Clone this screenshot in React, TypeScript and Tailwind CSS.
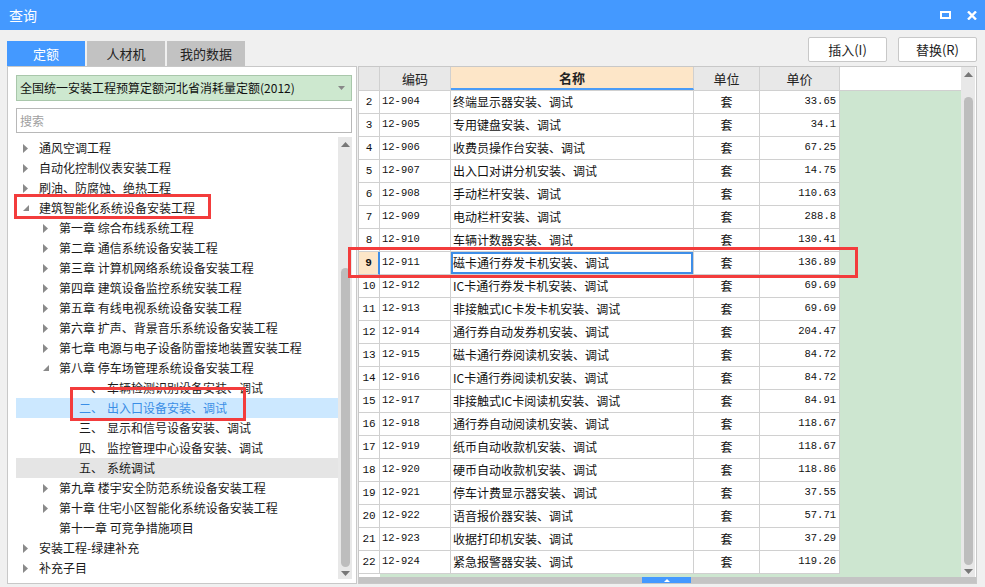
import React from "react";

const rows: [number, string, string, string][] = [
  [2, "12-904", "终端显示器安装、调试", "33.65"],
  [3, "12-905", "专用键盘安装、调试", "34.1"],
  [4, "12-906", "收费员操作台安装、调试", "67.25"],
  [5, "12-907", "出入口对讲分机安装、调试", "14.75"],
  [6, "12-908", "手动栏杆安装、调试", "110.63"],
  [7, "12-909", "电动栏杆安装、调试", "288.8"],
  [8, "12-910", "车辆计数器安装、调试", "130.41"],
  [9, "12-911", "磁卡通行券发卡机安装、调试", "136.89"],
  [10, "12-912", "IC卡通行券发卡机安装、调试", "69.69"],
  [11, "12-913", "非接触式IC卡发卡机安装、调试", "69.69"],
  [12, "12-914", "通行券自动发券机安装、调试", "204.47"],
  [13, "12-915", "磁卡通行券阅读机安装、调试", "84.72"],
  [14, "12-916", "IC卡通行券阅读机安装、调试", "84.72"],
  [15, "12-917", "非接触式IC卡阅读机安装、调试", "84.91"],
  [16, "12-918", "通行券自动阅读机安装、调试", "118.67"],
  [17, "12-919", "纸币自动收款机安装、调试", "118.67"],
  [18, "12-920", "硬币自动收款机安装、调试", "118.86"],
  [19, "12-921", "停车计费显示器安装、调试", "37.55"],
  [20, "12-922", "语音报价器安装、调试", "57.71"],
  [21, "12-923", "收据打印机安装、调试", "37.29"],
  [22, "12-924", "紧急报警器安装、调试", "119.26"],
];

type TreeItem = {
  level: number;
  arrow: "right" | "down" | "none";
  text: string;
  label?: string;
  state?: "sel" | "hover";
};

const tree: TreeItem[] = [
  { level: 0, arrow: "right", text: "通风空调工程" },
  { level: 0, arrow: "right", text: "自动化控制仪表安装工程" },
  { level: 0, arrow: "right", text: "刷油、防腐蚀、绝热工程" },
  { level: 0, arrow: "down", text: "建筑智能化系统设备安装工程" },
  { level: 1, arrow: "right", text: "第一章 综合布线系统工程" },
  { level: 1, arrow: "right", text: "第二章 通信系统设备安装工程" },
  { level: 1, arrow: "right", text: "第三章 计算机网络系统设备安装工程" },
  { level: 1, arrow: "right", text: "第四章 建筑设备监控系统安装工程" },
  { level: 1, arrow: "right", text: "第五章 有线电视系统设备安装工程" },
  { level: 1, arrow: "right", text: "第六章 扩声、背景音乐系统设备安装工程" },
  { level: 1, arrow: "right", text: "第七章 电源与电子设备防雷接地装置安装工程" },
  { level: 1, arrow: "down", text: "第八章 停车场管理系统设备安装工程" },
  { level: 2, arrow: "none", label: "一、", text: "车辆检测识别设备安装、调试" },
  { level: 2, arrow: "none", label: "二、", text: "出入口设备安装、调试", state: "sel" },
  { level: 2, arrow: "none", label: "三、", text: "显示和信号设备安装、调试" },
  { level: 2, arrow: "none", label: "四、", text: "监控管理中心设备安装、调试" },
  { level: 2, arrow: "none", label: "五、", text: "系统调试", state: "hover" },
  { level: 1, arrow: "right", text: "第九章 楼宇安全防范系统设备安装工程" },
  { level: 1, arrow: "right", text: "第十章 住宅小区智能化系统设备安装工程" },
  { level: 1, arrow: "none", text: "第十一章 可竞争措施项目" },
  { level: 0, arrow: "right", text: "安装工程-绿建补充" },
  { level: 0, arrow: "right", text: "补充子目" },
];

const FONT = { fontFamily: '"Noto Sans CJK SC", "Noto Sans", sans-serif' };
const MONO = { fontFamily: '"Liberation Mono", "Noto Sans CJK SC", monospace' };

function Arrow({ kind }: { kind: "right" | "down" | "none" }) {
  if (kind === "none") return <span className="inline-block w-[5px]" />;
  if (kind === "right")
    return (
      <svg width="5" height="9" viewBox="0 0 5 9" className="shrink-0">
        <path d="M0 0 L5 4.5 L0 9 Z" fill="#8a8a8a" />
      </svg>
    );
  return (
    <svg width="6" height="6" viewBox="0 0 6 6" className="shrink-0">
      <path d="M6 0 L6 6 L0 6 Z" fill="#8a8a8a" />
    </svg>
  );
}

function TreeRow({ item }: { item: TreeItem }) {
  const bg =
    item.state === "sel" ? "bg-[#cce8ff]" : item.state === "hover" ? "bg-[#e5e5e5]" : "";
  const color = item.state === "sel" ? "text-[#3a8ee6]" : "text-[#1a1a1a]";
  if (item.level === 2) {
    return (
      <div className={`h-[20px] flex items-center ${bg} ${color}`}>
        <span className="pl-[63px] w-[91px] shrink-0">{item.label}</span>
        <span className="whitespace-nowrap">{item.text}</span>
      </div>
    );
  }
  const arrowPad = item.level === 0 ? "pl-[7px]" : "pl-[27px]";
  return (
    <div className={`h-[20px] flex items-center ${bg} ${color} ${arrowPad}`}>
      <span className="w-[16px] shrink-0 flex items-center">
        <Arrow kind={item.arrow} />
      </span>
      <span className="whitespace-nowrap">{item.text}</span>
    </div>
  );
}

function VScroll({ thumbTop, thumbBottom }: { thumbTop: number; thumbBottom: number }) {
  return (
    <div className="w-[14px] h-full bg-[#e8e8e8] flex flex-col items-center">
      <div className="h-[12px] flex items-center justify-center mt-[1px]">
        <svg width="9" height="5" viewBox="0 0 9 5">
          <path d="M0 5 L4.5 0 L9 5 Z" fill="#777" />
        </svg>
      </div>
      <div style={{ height: thumbTop }} className="shrink-0" />
      <div className="w-[9px] rounded-full bg-[#bdbdbd] flex-1" style={{ marginBottom: thumbBottom }} />
      <div className="h-[12px] flex items-center justify-center">
        <svg width="9" height="5" viewBox="0 0 9 5">
          <path d="M0 0 L4.5 5 L9 0 Z" fill="#777" />
        </svg>
      </div>
    </div>
  );
}

export default function App() {
  return (
    <div className="relative w-[985px] h-[587px] bg-[#f0f0f0] flex flex-col overflow-hidden text-[12px]" style={FONT}>
      {/* Title bar */}
      <div className="h-[30px] bg-[#4499ff] flex items-center justify-between pl-[9px] pr-[8px] shrink-0">
        <span className="text-white text-[14px]">查询</span>
        <div className="flex items-center gap-[16px]">
          <svg width="11" height="8" viewBox="0 0 11 8">
            <rect x="1" y="1" width="9" height="6" fill="none" stroke="#fff" strokeWidth="2" />
          </svg>
          <svg width="10" height="9" viewBox="0 0 10 9">
            <path d="M1 0.5 L9 8.5 M9 0.5 L1 8.5" stroke="#fff" strokeWidth="2.4" />
          </svg>
        </div>
      </div>

      {/* Tabs + buttons */}
      <div className="h-[36px] flex items-end justify-between pl-[7px] pr-[8px] shrink-0 text-[13px]">
        <div className="flex gap-[2px] items-end">
          <div className="w-[78px] h-[25px] bg-[#4499ff] text-white flex items-center justify-center">定额</div>
          <div className="w-[78px] h-[25px] bg-[#c2c2c2] text-[#222] flex items-center justify-center">人材机</div>
          <div className="w-[78px] h-[25px] bg-[#c2c2c2] text-[#222] flex items-center justify-center">我的数据</div>
        </div>
        <div className="flex gap-[11px] self-start mt-[7px]">
          <div className="w-[79px] h-[25px] bg-white border border-[#c8c8c8] rounded-[2px] flex items-center justify-center text-[#222]">插入(I)</div>
          <div className="w-[79px] h-[25px] bg-white border border-[#c8c8c8] rounded-[2px] flex items-center justify-center text-[#222]">替换(R)</div>
        </div>
      </div>

      {/* Main */}
      <div className="flex h-[518px] pl-[7px] shrink-0">
        {/* Left panel */}
        <div className="w-[350px] h-full bg-white border border-[#c8c8c8] flex flex-col pl-[8px] pr-[4px] pt-[8px]">
          <div className="h-[26px] bg-[#cde8cf] border border-[#a9c7ab] flex items-center justify-between pl-[3px] pr-[6px] text-[#111]">
            <span className="whitespace-nowrap">全国统一安装工程预算定额河北省消耗量定额(2012)</span>
            <svg width="7" height="4" viewBox="0 0 7 4">
              <path d="M0 0 L7 0 L3.5 4 Z" fill="#888" />
            </svg>
          </div>
          <div className="h-[25px] mt-[7px] border border-[#b8b8b8] flex items-center pl-[3px] text-[#a0a0a0]">搜索</div>
          <div className="flex-1 flex mt-[4px] min-h-0">
            <div className="flex-1 pt-[1px]">
              {tree.map((t, i) => (
                <TreeRow key={i} item={t} />
              ))}
            </div>
            <div className="h-[445px] pb-[3px]">
              <VScroll thumbTop={118} thumbBottom={0} />
            </div>
          </div>
        </div>

        {/* Right grid */}
        <div className="ml-[1px] w-[619px] h-full border border-[#c8c8c8] bg-white flex flex-col">
          <div className="flex-1 flex min-h-0">
            <div className="w-[602px] flex flex-col">
              {/* Header */}
              <div className="flex h-[24px] shrink-0 border-b border-[#d0d0d0] text-[13px] text-[#222]">
                <div className="w-[21px] bg-[#e8e8e8] border-r border-[#d0d0d0]" />
                <div className="w-[71px] bg-[#e8e8e8] border-r border-[#d0d0d0] flex items-center justify-center">编码</div>
                <div className="w-[243px] bg-[#fde6c8] border-r border-[#d0d0d0] flex items-center justify-center font-bold border-b-2 border-b-[#4a9cf7]">名称</div>
                <div className="w-[66px] bg-[#e8e8e8] border-r border-[#d0d0d0] flex items-center justify-center">单位</div>
                <div className="w-[80px] bg-[#e8e8e8] border-r border-[#d0d0d0] flex items-center justify-center">单价</div>
                <div className="flex-1 bg-white" />
              </div>
              {/* Body */}
              {rows.map(([n, code, name, price]) => {
                const sel = n === 9;
                return (
                  <div key={n} className="flex h-[23px] shrink-0 text-[#111]">
                    <div
                      className={`w-[21px] border-r border-b border-[#d0d0d0] flex items-center justify-center text-[11px] ${
                        sel ? "bg-[#fde6c8] font-bold border-r-2 border-r-[#3e8ee8]" : "bg-white"
                      }`}
                      style={MONO}
                    >
                      {n}
                    </div>
                    <div className="w-[71px] bg-white border-r border-b border-[#d0d0d0] flex items-center pl-[2px] text-[10.5px]" style={MONO}>
                      {code}
                    </div>
                    <div
                      className={`w-[243px] bg-white border-r border-b border-[#d0d0d0] flex items-center pl-[2px] whitespace-nowrap ${
                        sel ? "ring-2 ring-inset ring-[#3e8ee8]" : ""
                      }`}
                    >
                      {name}
                    </div>
                    <div className="w-[66px] bg-white border-r border-b border-[#d0d0d0] flex items-center justify-center">套</div>
                    <div className="w-[80px] bg-white border-r border-b border-[#d0d0d0] flex items-center justify-end pr-[3px] text-[10.5px]" style={MONO}>
                      {price}
                    </div>
                    <div className="flex-1 bg-[#cde6d0]" />
                  </div>
                );
              })}
              <div className="flex-1 flex">
                <div className="w-[21px] bg-white" />
                <div className="flex-1 bg-[#cde6d0]" />
              </div>
            </div>
            <div className="w-[14px] h-full">
              <VScroll thumbTop={17} thumbBottom={0} />
            </div>
          </div>
          <div className="h-[6px] bg-[#c4c4c4] shrink-0 relative flex">
            <div className="ml-[283px] w-[49px] h-full bg-[#4499ff] flex items-center justify-center">
              <svg width="6" height="3" viewBox="0 0 6 3">
                <path d="M0 3 L3 0 L6 3 Z" fill="#fff" />
              </svg>
            </div>
          </div>
        </div>
      </div>

      {/* Red annotation boxes */}
      <div className="absolute left-[14px] top-[194px] w-[197px] h-[25px] border-[3px] border-[#f33c3c]" />
      <div className="absolute left-[70px] top-[387px] w-[176px] h-[34px] border-[3px] border-[#f33c3c]" />
      <div className="absolute left-[348px] top-[247px] w-[510px] h-[31px] border-[3px] border-[#f33c3c]" />
    </div>
  );
}
